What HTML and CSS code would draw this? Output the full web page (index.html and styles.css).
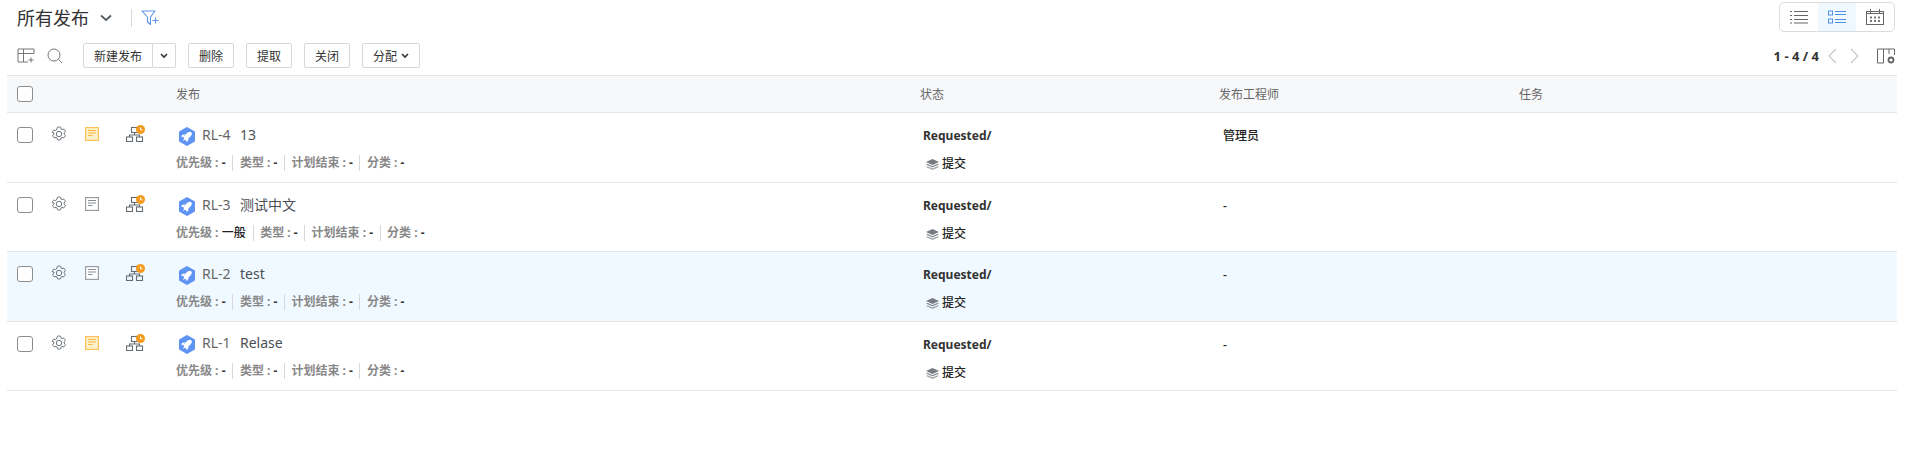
FILE: index.html
```html
<!DOCTYPE html>
<html lang="zh">
<head>
<meta charset="utf-8">
<title>所有发布</title>
<link rel="stylesheet" href="styles.css">
</head>
<body>
<svg class="defs" width="0" height="0" aria-hidden="true">
  <defs>
    <symbol id="i-gear" viewBox="0 0 16 16">
      <path d="M6.500 1.200c.3-.3 2.700-.3 3 0l.5 1.800 1 .6 1.800-.5c.4 0 1.600 2.100 1.500 2.500l-1.300 1.400v1l1.300 1.400c.1.400-1.100 2.500-1.500 2.500l-1.800-.5-1 .6-.5 1.800c-.3.300-2.700.3-3 0l-.5-1.800-1-.6-1.800.5c-.4 0-1.600-2.100-1.500-2.500l1.300-1.400v-1L1.200 6.600c-.1-.4 1.100-2.500 1.500-2.500l1.800.5 1-.6z" fill="none" stroke="currentColor" stroke-width="1" stroke-linejoin="round"/>
      <circle cx="8" cy="8" r="2.700" fill="none" stroke="currentColor" stroke-width="1"/>
    </symbol>
    <symbol id="i-note" viewBox="0 0 14 14">
      <rect x=".6" y=".6" width="12.800" height="12.800" fill="#fff" stroke="#9a9fa5" stroke-width="1.200"/>
      <path d="M3 3.500h8M3 6h8M3 8.500h4.500" stroke="#8a8f95" stroke-width="1.200" fill="none"/>
    </symbol>
    <symbol id="i-note-on" viewBox="0 0 14 14">
      <rect x=".6" y=".6" width="12.800" height="12.800" fill="#fdf1cc" stroke="#fbc05a" stroke-width="1.200"/>
      <path d="M3 3.500h8M3 6h8M3 8.500h4.500" stroke="#fbb43c" stroke-width="1.200" fill="none"/>
    </symbol>
    <symbol id="i-tree" viewBox="0 0 19 17">
      <g fill="none" stroke="#666c73" stroke-width="1.100">
        <rect x="5.500" y="2.500" width="6" height="5"/>
        <rect x=".5" y="12" width="6" height="4.500"/>
        <rect x="10.500" y="12" width="6" height="4.500"/>
        <path d="M8.500 7.500v2.500M3.500 12v-2h10v2"/>
      </g>
      <circle cx="14.500" cy="4.500" r="4.500" fill="#f59a1c"/>
      <path d="M14.500 2.300v2.500h2" fill="none" stroke="#fff" stroke-width="1"/>
    </symbol>
    <symbol id="i-rocket" viewBox="0 0 18 19">
      <path d="M9 1 16 5v9l-7 4-7-4V5z" fill="#5f93f4" stroke="#5f93f4" stroke-width="2" stroke-linejoin="round"/>
      <ellipse cx="9.700" cy="8.800" rx="2.500" ry="5" transform="rotate(45 9.700 8.800)" fill="#fff"/>
      <path d="M7 7.200 4 8l-.8 1.800 2.600.2zM10.700 11 10 14l-1.800.8L8 12.200zM6.200 11.800l1 1-2.400 1.400z" fill="#fff"/>
    </symbol>
    <symbol id="i-layers" viewBox="0 0 13 11">
      <path d="M6.500 0 13 3 6.500 6 0 3z" fill="#777c82"/>
      <path d="M1.300 4.800 6.500 7.100l5.200-2.300L13 5.500 6.500 8.500 0 5.500z" fill="#8c9196"/>
      <path d="M1.300 7.300 6.500 9.600l5.200-2.300L13 8 6.500 11 0 8z" fill="#a0a4a9"/>
    </symbol>
  </defs>
</svg>

<header class="titlebar">
  <div class="title-group">
    <h1 class="title">所有发布</h1>
    <svg class="title-caret" viewBox="0 0 12 8" width="12" height="8"><path d="M1 1.500 6 6l5-4.500" fill="none" stroke="#555b61" stroke-width="1.800"/></svg>
    <span class="title-sep"></span>
    <svg class="filter-add" viewBox="0 0 19 16" width="19" height="16"><path d="M1 1h13L9.500 7v7.500L6.500 12V7z" fill="none" stroke="#5d94ea" stroke-width="1.100" stroke-linejoin="round"/><path d="M11.500 10.500h6M14.500 7.500v6" stroke="#5d94ea" stroke-width="1.100" fill="none"/></svg>
  </div>
  <div class="view-switch">
    <button class="view-btn">
      <svg viewBox="0 0 18 14" width="18" height="14"><path d="M0 1.500h2M4 1.500h14M0 5.500h2M4 5.500h14M0 9.500h2M4 9.500h14M0 13h2M4 13h14" stroke="#666" fill="none"/></svg>
    </button>
    <button class="view-btn is-active">
      <svg viewBox="0 0 18 14" width="18" height="14"><g fill="none" stroke="#4f8fe8"><rect x=".5" y="1" width="4" height="4"/><rect x=".5" y="9" width="4" height="4"/><path d="M7 1.500h11M7 4.500h11M7 9.500h11M7 12.500h11"/></g></svg>
    </button>
    <button class="view-btn">
      <svg viewBox="0 0 18 16" width="18" height="16"><g fill="none" stroke="#666"><rect x=".5" y="2.500" width="17" height="13"/><path d="M4.500 0v4M13.500 0v4M.5 4.500h17"/></g><path d="M4 7.500h2v2H4zM8 7.500h2v2H8zM12 7.500h2v2h-2zM4 11h2v2H4zM8 11h2v2H8zM12 11h2v2h-2z" fill="#777"/></svg>
    </button>
  </div>
</header>

<div class="toolbar">
  <div class="tool-left">
    <svg class="tool-icon" viewBox="0 0 18 15" width="18" height="15"><path d="M17 5.500V1H1v13h10M1 5.500h16M6.500 1v13" fill="none" stroke="#777" stroke-width="1"/><path d="M14 9.500v5M11.500 12h5" stroke="#777" fill="none"/></svg>
    <svg class="tool-icon search" viewBox="0 0 16 16" width="16" height="16"><circle cx="7" cy="7" r="6" fill="none" stroke="#777" stroke-width="1"/><path d="m11.500 11.500 3.500 3.500" stroke="#777" stroke-width="1"/></svg>
    <div class="split-btn">
      <button class="btn split-main">新建发布</button>
      <button class="btn split-arrow"><svg viewBox="0 0 8 6" width="8" height="6"><path d="M1 1l3 3 3-3" fill="none" stroke="#333" stroke-width="1.600"/></svg></button>
    </div>
    <button class="btn">删除</button>
    <button class="btn">提取</button>
    <button class="btn">关闭</button>
    <button class="btn">分配 <svg viewBox="0 0 8 6" width="8" height="6"><path d="M1 1l3 3 3-3" fill="none" stroke="#333" stroke-width="1.600"/></svg></button>
  </div>
  <div class="tool-right">
    <span class="pager">1 - 4 / 4</span>
    <svg class="pg-arrow" viewBox="0 0 10 16" width="10" height="16"><path d="M9 1 2 8l7 7" fill="none" stroke="#c4c7cb" stroke-width="1.200"/></svg>
    <svg class="pg-arrow next" viewBox="0 0 10 16" width="10" height="16"><path d="m1 1 7 7-7 7" fill="none" stroke="#c4c7cb" stroke-width="1.200"/></svg>
    <svg class="col-set" viewBox="0 0 19 16" width="19" height="16"><path d="M6.500 15H.5V1h17v6M6.500 1v14M12 1v5" fill="none" stroke="#666"/><circle cx="14" cy="12" r="2.500" fill="none" stroke="#666" stroke-width="1.800"/></svg>
  </div>
</div>

<section class="table">
  <div class="row head">
    <span class="check"></span><span></span><span></span><span></span>
    <span class="th">发布</span>
    <span class="th">状态</span>
    <span class="th">发布工程师</span>
    <span class="th">任务</span>
  </div>

  <article class="row item">
    <span class="check"></span>
    <svg class="ic-gear"><use href="#i-gear"/></svg>
    <svg class="ic-note"><use href="#i-note-on"/></svg>
    <svg class="ic-tree"><use href="#i-tree"/></svg>
    <div class="main">
      <div class="name-line"><svg class="ic-rocket"><use href="#i-rocket"/></svg><span class="code">RL-4</span><span class="name">13</span></div>
      <div class="meta"><span class="m">优先级 : <b>-</b></span><span class="m">类型 : <b>-</b></span><span class="m">计划结束 : <b>-</b></span><span class="m">分类 : <b>-</b></span></div>
    </div>
    <div class="status"><div class="st-name">Requested/</div><div class="st-step"><svg class="ic-layers"><use href="#i-layers"/></svg>提交</div></div>
    <div class="eng">管理员</div>
    <div></div>
  </article>

  <article class="row item">
    <span class="check"></span>
    <svg class="ic-gear"><use href="#i-gear"/></svg>
    <svg class="ic-note"><use href="#i-note"/></svg>
    <svg class="ic-tree"><use href="#i-tree"/></svg>
    <div class="main">
      <div class="name-line"><svg class="ic-rocket"><use href="#i-rocket"/></svg><span class="code">RL-3</span><span class="name">测试中文</span></div>
      <div class="meta"><span class="m">优先级 : <b class="val">一般</b></span><span class="m">类型 : <b>-</b></span><span class="m">计划结束 : <b>-</b></span><span class="m">分类 : <b>-</b></span></div>
    </div>
    <div class="status"><div class="st-name">Requested/</div><div class="st-step"><svg class="ic-layers"><use href="#i-layers"/></svg>提交</div></div>
    <div class="eng">-</div>
    <div></div>
  </article>

  <article class="row item is-hover">
    <span class="check"></span>
    <svg class="ic-gear"><use href="#i-gear"/></svg>
    <svg class="ic-note"><use href="#i-note"/></svg>
    <svg class="ic-tree"><use href="#i-tree"/></svg>
    <div class="main">
      <div class="name-line"><svg class="ic-rocket"><use href="#i-rocket"/></svg><span class="code">RL-2</span><span class="name">test</span></div>
      <div class="meta"><span class="m">优先级 : <b>-</b></span><span class="m">类型 : <b>-</b></span><span class="m">计划结束 : <b>-</b></span><span class="m">分类 : <b>-</b></span></div>
    </div>
    <div class="status"><div class="st-name">Requested/</div><div class="st-step"><svg class="ic-layers"><use href="#i-layers"/></svg>提交</div></div>
    <div class="eng">-</div>
    <div></div>
  </article>

  <article class="row item">
    <span class="check"></span>
    <svg class="ic-gear"><use href="#i-gear"/></svg>
    <svg class="ic-note"><use href="#i-note-on"/></svg>
    <svg class="ic-tree"><use href="#i-tree"/></svg>
    <div class="main">
      <div class="name-line"><svg class="ic-rocket"><use href="#i-rocket"/></svg><span class="code">RL-1</span><span class="name">Relase</span></div>
      <div class="meta"><span class="m">优先级 : <b>-</b></span><span class="m">类型 : <b>-</b></span><span class="m">计划结束 : <b>-</b></span><span class="m">分类 : <b>-</b></span></div>
    </div>
    <div class="status"><div class="st-name">Requested/</div><div class="st-step"><svg class="ic-layers"><use href="#i-layers"/></svg>提交</div></div>
    <div class="eng">-</div>
    <div></div>
  </article>
</section>
</body>
</html>
```
FILE: styles.css
```css
* { box-sizing: border-box; }
html, body { margin: 0; height: 100%; background: #fff; overflow: hidden; }
body {
  padding: 0 15px 0 7px;
  font-family: "Noto Sans", "Noto Sans CJK SC", sans-serif;
  font-size: 12px;
  color: #333;
}
.defs { display: block; height: 0; }
button { font: inherit; color: inherit; background: none; border: 0; padding: 0; }

.titlebar { display: flex; justify-content: space-between; align-items: flex-start; height: 36px; padding-left: 10px; }
.title-group { display: flex; align-items: center; height: 36px; }
.title { margin: 0; font-size: 18px; font-weight: 400; line-height: 36px; color: #333; }
.title-caret { margin-left: 11px; }
.title-sep { width: 1px; height: 18px; margin-left: 19px; background: #d8d8d8; }
.filter-add { margin-left: 9px; }

.view-switch { display: flex; height: 30px; margin-top: 2px; margin-right: 2px; border: 1px solid #dcdcdc; border-radius: 5px; overflow: hidden; }
.view-btn { width: 38px; display: flex; align-items: center; justify-content: center; }
.view-btn.is-active { background: #f0f8ff; }

.toolbar { display: flex; justify-content: space-between; align-items: center; height: 39px; padding-left: 10px; }
.tool-left { display: flex; align-items: center; }
.tool-icon.search { margin-left: 12px; margin-right: 20px; }
.btn { height: 25px; padding: 0 10px; border: 1px solid #d8d8d8; border-radius: 2px; background: #fff; display: inline-flex; align-items: center; gap: 4px; margin-right: 12px; white-space: nowrap; }
.split-btn { display: flex; margin-right: 12px; }
.split-main { border-radius: 2px 0 0 2px; margin: 0; width: 70px; justify-content: center; padding: 0; }
.split-arrow { border-left: 0; border-radius: 0 2px 2px 0; margin: 0; width: 23px; padding: 0; justify-content: center; }

.tool-right { display: flex; align-items: center; padding-right: 1px; }
.pager { font-size: 13px; font-weight: 700; color: #333; margin-right: 8px; }
.pg-arrow.next { margin-left: 13px; }
.col-set { margin-left: 17px; }

.row {
  display: grid;
  grid-template-columns: 35px 33px 41px 50px 744px 299px 300px 1fr;
  padding-left: 10px;
  border-bottom: 1px solid #e6e6e6;
}
.head { height: 38px; align-items: center; background: #f7f8fa; border-top: 1px solid #e6e6e6; }
.th { color: #666; }
.item { height: 69.330px; align-content: start; padding-top: 10px; }
.head + .item { height: 70px; }
.is-hover { background: #f0f9ff; }
.check { display: block; width: 16px; height: 16px; border: 1px solid #8c8c8c; border-radius: 3px; background: #fff; }
.item .check { margin-top: 4px; }

.ic-gear { width: 16px; height: 16px; color: #6f757b; margin-top: 3px; margin-left: -1px; }
.ic-note { width: 14px; height: 14px; margin-top: 4px; }
.ic-tree { width: 19px; height: 17px; margin-top: 2px; }

.name-line { display: flex; align-items: center; height: 24px; margin-left: 2px; }
.ic-rocket { width: 18px; height: 19px; margin-right: 6px; margin-top: 2px; }
.code { font-size: 14px; color: #666; margin-right: 10px; margin-bottom: 2px; width: 28px; white-space: nowrap; }
.name { font-size: 14px; color: #4a4f55; margin-bottom: 2px; }

.meta { display: flex; align-items: center; margin-top: 7px; height: 17px; }
.m { font-weight: 700; color: #888; padding: 0 6.500px; border-left: 1px solid #d8d8d8; white-space: nowrap; line-height: 16px; }
.m:first-child { padding-left: 0; padding-right: 7px; border-left: 0; }
.m b { font-weight: 700; color: #333; }
.m b.val { font-weight: 500; color: #222; }

.status { padding-left: 3px; padding-top: 4px; }
.st-name { font-weight: 700; line-height: 17px; color: #333; }
.st-step { display: flex; align-items: center; margin-top: 11px; margin-left: 3px; line-height: 17px; font-weight: 500; color: #222; }
.ic-layers { width: 13px; height: 11px; margin-right: 3px; margin-top: 2px; }
.eng { padding-left: 4px; padding-top: 4px; font-weight: 500; line-height: 17px; color: #222; }
```
